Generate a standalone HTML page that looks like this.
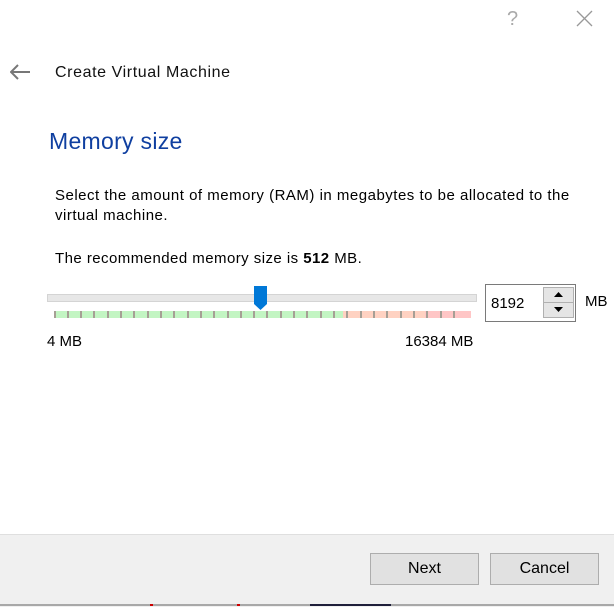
<!DOCTYPE html>
<html><head><style>
body{margin:0;width:614px;height:606px;background:#fff;position:relative;overflow:hidden;font-family:"Liberation Sans",sans-serif;color:#000}
.a{position:absolute;white-space:nowrap}
.btn{position:absolute;top:553px;width:107px;height:30px;border:1px solid #adadad;background:#e1e1e1;font-size:16px;text-align:center;line-height:30px}
</style></head><body>
<div class="a" style="left:507px;top:8px;font-size:20px;color:#aaa;font-weight:300">?</div>
<svg class="a" style="left:576px;top:10px" width="17" height="17"><path d="M1 1L16 16M16 1L1 16" stroke="#999" stroke-width="1.3"/></svg>
<svg class="a" style="left:10px;top:64px" width="21" height="16"><path d="M1 8H20M8 1L1 8L8 15" fill="none" stroke="#777" stroke-width="2"/></svg>
<div class="a" style="left:55px;top:64px;font-size:16px;color:#111;letter-spacing:0.6px">Create Virtual Machine</div>
<div class="a" style="left:49px;top:128px;font-size:23px;color:#0f3fa0;letter-spacing:0.3px">Memory size</div>
<div class="a" style="left:55px;top:186px;font-size:15px;line-height:20px;letter-spacing:0.5px">Select the amount of memory (RAM) in megabytes to be allocated to the<br>virtual machine.</div>
<div class="a" style="left:55px;top:250px;font-size:15px;letter-spacing:0.45px">The recommended memory size is <b>512</b> MB.</div>
<div class="a" style="left:47px;top:294px;width:428px;height:6px;background:#e7e7e7;border:1px solid #d4d4d4"></div>
<svg class="a" style="left:0;top:280px" width="614" height="40">
<rect x="54" y="31" width="289" height="7" fill="#c3f5c3"/>
<rect x="343" y="31" width="82" height="7" fill="#ffd2c2"/>
<rect x="425" y="31" width="46" height="7" fill="#ffc6c6"/>
<g fill="#a69f95">
<rect x="54" y="31" width="2" height="7"/><rect x="67" y="31" width="2" height="7"/><rect x="80" y="31" width="2" height="7"/><rect x="93" y="31" width="2" height="7"/><rect x="107" y="31" width="2" height="7"/><rect x="120" y="31" width="2" height="7"/><rect x="133" y="31" width="2" height="7"/><rect x="147" y="31" width="2" height="7"/><rect x="160" y="31" width="2" height="7"/><rect x="173" y="31" width="2" height="7"/><rect x="187" y="31" width="2" height="7"/><rect x="200" y="31" width="2" height="7"/><rect x="213" y="31" width="2" height="7"/><rect x="227" y="31" width="2" height="7"/><rect x="240" y="31" width="2" height="7"/><rect x="253" y="31" width="2" height="7"/><rect x="266" y="31" width="2" height="7"/><rect x="280" y="31" width="2" height="7"/><rect x="293" y="31" width="2" height="7"/><rect x="306" y="31" width="2" height="7"/><rect x="320" y="31" width="2" height="7"/><rect x="333" y="31" width="2" height="7"/><rect x="346" y="31" width="2" height="7"/><rect x="360" y="31" width="2" height="7"/><rect x="373" y="31" width="2" height="7"/><rect x="386" y="31" width="2" height="7"/><rect x="400" y="31" width="2" height="7"/><rect x="413" y="31" width="2" height="7"/><rect x="426" y="31" width="2" height="7"/><rect x="440" y="31" width="2" height="7"/><rect x="453" y="31" width="2" height="7"/>
</g>
<path d="M254 6H267V24L260.5 30L254 24Z" fill="#0078d7"/>
</svg>
<div class="a" style="left:47px;top:333px;font-size:15px">4 MB</div>
<div class="a" style="left:405px;top:333px;font-size:15px">16384 MB</div>
<div class="a" style="left:485px;top:284px;width:89px;height:36px;border:1px solid #7a7a7a;background:#fff"></div>
<div class="a" style="left:491px;top:295px;font-size:15px">8192</div>
<div class="a" style="left:543px;top:287px;width:29px;height:14px;background:#e5e5e5;border:1px solid #b0b0b0"></div>
<div class="a" style="left:543px;top:302px;width:29px;height:14px;background:#e5e5e5;border:1px solid #b0b0b0"></div>
<svg class="a" style="left:543px;top:287px" width="31" height="30"><path d="M11 10L15.5 5L20 10Z M11 20L15.5 25L20 20Z" fill="#000"/></svg>
<div class="a" style="left:585px;top:293px;font-size:15px">MB</div>
<div class="a" style="left:0;top:534px;width:614px;height:72px;background:#f0f0f0;border-top:1px solid #dfdfdf"></div>
<div class="btn" style="left:370px">Next</div>
<div class="btn" style="left:490px">Cancel</div>
<div class="a" style="left:0;top:604px;width:614px;height:2px;background:#a8a8a8"></div>
<div class="a" style="left:150px;top:604px;width:3px;height:2px;background:#c00"></div>
<div class="a" style="left:237px;top:604px;width:3px;height:2px;background:#c00"></div>
<div class="a" style="left:310px;top:604px;width:81px;height:2px;background:#1f1f3a"></div>
</body></html>
